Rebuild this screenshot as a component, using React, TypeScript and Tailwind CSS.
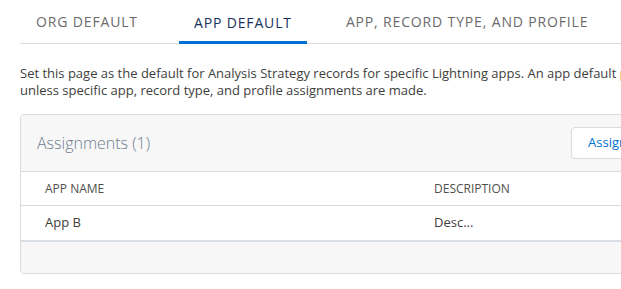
import React from "react";

export default function App() {
  return (
    <div className="w-[621px] h-[289px] overflow-hidden bg-white" style={{ fontFamily: '"Open Sans", sans-serif' }}>
      <div className="w-[960px] pl-[20px]">
        <div className="flex h-[44px] border-b border-[#dddbda] items-stretch">
          <div className="px-[16px] flex items-center text-[14px] tracking-[0.85px] text-[#6b6b6b] mr-[25px]">ORG DEFAULT</div>
          <div className="px-[15px] flex items-center text-[14px] tracking-[0.85px] text-[#16325c] border-b-[3px] border-[#0070d2] mb-[-1px] pt-[3px] mr-[24px]">APP DEFAULT</div>
          <div className="px-[15px] flex items-center text-[14px] tracking-[0.85px] text-[#6b6b6b]">APP, RECORD TYPE, AND PROFILE</div>
        </div>
        <p className="mt-[21px] text-[13px] leading-[17px] text-[#3e3e3c] w-[820px]">
          Set this page as the default for Analysis Strategy records for specific Lightning apps. An app default page overrides the org default page unless specific app, record type, and profile assignments are made.
        </p>
        <div className="mt-[15px] w-[720px] border border-[#dddbda] rounded-[4px] overflow-hidden">
          <div className="h-[57px] bg-[#f7f7f7] border-b border-[#dddbda] flex items-center pl-[16px]">
            <div className="text-[16px] font-light text-[#6f7d8f]">Assignments (1)</div>
            <div className="ml-[421px] h-[32px] px-[16px] border border-[#dddbda] rounded-[4px] bg-white flex items-center text-[13px] text-[#0070d2]">Assign Apps</div>
          </div>
          <div className="grid grid-cols-[413px_1fr] h-[34px] items-center text-[12px] text-[#514f4d] border-b border-[#dddbda]">
            <div className="pl-[24px]">APP NAME</div>
            <div>DESCRIPTION</div>
          </div>
          <div className="grid grid-cols-[413px_1fr] h-[36px] items-center text-[13px] text-[#3e3e3c] border-b-[2px] border-[#d8dde6]">
            <div className="pl-[24px]">App B</div>
            <div>Desc...</div>
          </div>
          <div className="h-[31px] bg-[#f7f7f7]"></div>
        </div>
      </div>
    </div>
  );
}
